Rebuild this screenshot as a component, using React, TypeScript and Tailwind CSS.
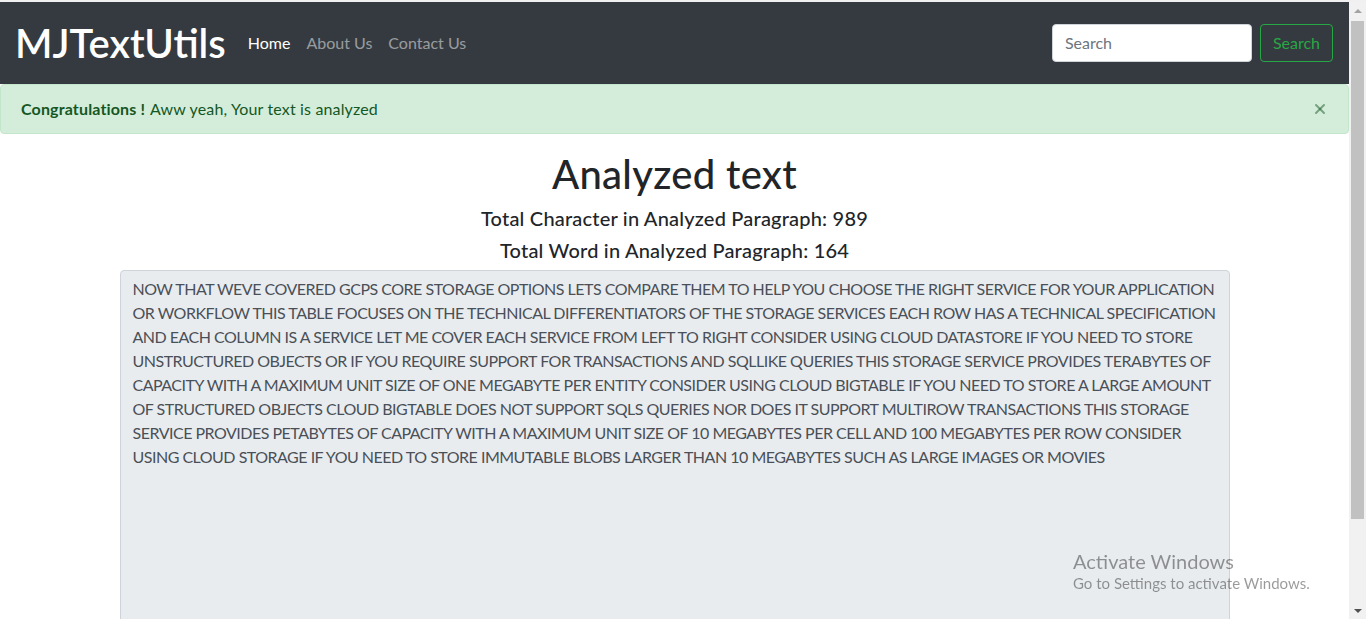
import { X } from 'lucide-react';

const lines = [
    'NOW THAT WEVE COVERED GCPS CORE STORAGE OPTIONS LETS COMPARE THEM TO HELP YOU CHOOSE THE RIGHT SERVICE FOR YOUR APPLICATION',
    'OR WORKFLOW THIS TABLE FOCUSES ON THE TECHNICAL DIFFERENTIATORS OF THE STORAGE SERVICES EACH ROW HAS A TECHNICAL SPECIFICATION',
    'AND EACH COLUMN IS A SERVICE LET ME COVER EACH SERVICE FROM LEFT TO RIGHT CONSIDER USING CLOUD DATASTORE IF YOU NEED TO STORE',
    'UNSTRUCTURED OBJECTS OR IF YOU REQUIRE SUPPORT FOR TRANSACTIONS AND SQLLIKE QUERIES THIS STORAGE SERVICE PROVIDES TERABYTES OF',
    'CAPACITY WITH A MAXIMUM UNIT SIZE OF ONE MEGABYTE PER ENTITY CONSIDER USING CLOUD BIGTABLE IF YOU NEED TO STORE A LARGE AMOUNT',
    'OF STRUCTURED OBJECTS CLOUD BIGTABLE DOES NOT SUPPORT SQLS QUERIES NOR DOES IT SUPPORT MULTIROW TRANSACTIONS THIS STORAGE',
    'SERVICE PROVIDES PETABYTES OF CAPACITY WITH A MAXIMUM UNIT SIZE OF 10 MEGABYTES PER CELL AND 100 MEGABYTES PER ROW CONSIDER',
    'USING CLOUD STORAGE IF YOU NEED TO STORE IMMUTABLE BLOBS LARGER THAN 10 MEGABYTES SUCH AS LARGE IMAGES OR MOVIES',
];

function Navbar() {
    return (
        <nav className="flex h-[82px] items-center bg-[#343a40] pl-[15px] pr-4">
            <a className="mr-[14px] text-[40px] font-semibold leading-none text-white">MJTextUtils</a>
            <ul className="flex items-center text-base">
                <li className="px-2 text-white">Home</li>
                <li className="px-2 text-white/50">About Us</li>
                <li className="px-2 text-white/50">Contact Us</li>
            </ul>
            <form className="ml-auto flex items-center gap-2">
                <input
                    type="search"
                    placeholder="Search"
                    className="h-[38px] w-[200px] rounded border border-[#ced4da] bg-white px-3 pb-px text-base text-[#495057] placeholder-[#6c757d] outline-none"
                />
                <button
                    type="button"
                    className="h-[38px] rounded border border-[#28a745] px-3 text-base text-[#28a745]"
                >
                    Search
                </button>
            </form>
        </nav>
    );
}

function Scrollbar() {
    return (
        <div className="flex w-[17px] shrink-0 flex-col items-center bg-[#f1f1f1]">
            <div className="flex h-[17px] w-full items-center justify-center">
                <div className="h-0 w-0 border-x-[4px] border-b-[4px] border-x-transparent border-b-[#a3a3a3]" />
            </div>
            <div className="mt-[2px] h-[498px] w-[13px] bg-[#c1c1c1]" />
            <div className="mt-auto flex h-[17px] w-full items-center justify-center">
                <div className="h-0 w-0 border-x-[4px] border-t-[4px] border-x-transparent border-t-[#505050]" />
            </div>
        </div>
    );
}

export default function App() {
    return (
        <div
            className="flex h-[619px] flex-col overflow-hidden bg-white text-[#212529]"
            style={{ fontFamily: '"Segoe UI", Lato, "Noto Sans", sans-serif' }}
        >
            <div className="h-[2px] shrink-0 bg-[#f0f0f0]" />
            <div className="flex min-h-0 flex-1">
                <div className="min-w-0 flex-1">
                    <Navbar />

                    {/* Alert */}
                    <div className="relative flex h-[50px] items-center rounded border border-[#c3e6cb] bg-[#d4edda] px-5 text-base tracking-[0.15px] text-[#155724]">
                        <strong className="font-bold">Congratulations !</strong>
                        <span className="ml-[5px]">Aww yeah, Your text is analyzed</span>
                        <X className="ml-auto h-[16px] w-[16px] text-[#155724]/50" strokeWidth={3} />
                    </div>

                    <div className="mx-auto mt-4 w-[1140px] px-[15px]">
                        <h1 className="mb-2 text-center text-[40px] font-medium leading-[48px] tracking-[0.3px]">
                            Analyzed text
                        </h1>
                        <h5 className="mb-2 text-center text-xl font-medium leading-6 tracking-[0.2px]">
                            Total Character in Analyzed Paragraph: 989
                        </h5>
                        <h5 className="mb-2 text-center text-xl font-medium leading-6 tracking-[0.2px]">
                            Total Word in Analyzed Paragraph: 164
                        </h5>
                        <div className="h-[400px] overflow-hidden rounded border border-[#ced4da] bg-[#e9ecef] px-3 py-[6px] text-base leading-6 tracking-[-0.5px] text-[#495057]">
                            {lines.map((l) => (
                                <div key={l} className="whitespace-nowrap">
                                    {l}
                                </div>
                            ))}
                        </div>
                    </div>
                </div>
                <Scrollbar />
            </div>

            {/* Windows activation watermark */}
            <div className="pointer-events-none fixed left-[1073px] top-[549px] text-[#000]/40">
                <div className="text-[20px] leading-6">Activate Windows</div>
                <div className="text-[15px] leading-5">Go to Settings to activate Windows.</div>
            </div>
        </div>
    );
}
